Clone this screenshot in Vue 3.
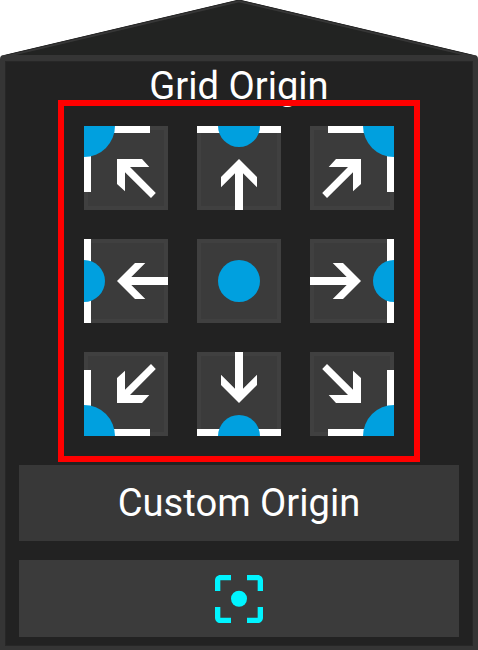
<script setup>
const corner = { bars: 'M0 0H66V7H7V66H0Z', r: 31, cx: 0, cy: 0, arrow: '33,33 58,33 65.3,41 46,41 71.8,67 67,72 41,46.3 41,65.3 33,58' }
const edge = { bars: 'M0 0H84V7H0Z', r: 21, cx: 42, cy: 0, arrow: '42,33 60,51 60,61.3 46,47.3 46,84 38,84 38,47.3 24,61.3 24,51' }
const center = { bars: '', r: 21, cx: 42, cy: 42, arrow: '' }

const cells = [
  { name: 'Top left', shape: corner, transform: '' },
  { name: 'Top', shape: edge, transform: '' },
  { name: 'Top right', shape: corner, transform: 'matrix(-1 0 0 1 84 0)' },
  { name: 'Left', shape: edge, transform: 'rotate(-90 42 42)' },
  { name: 'Center', shape: center, transform: '' },
  { name: 'Right', shape: edge, transform: 'rotate(90 42 42)' },
  { name: 'Bottom left', shape: corner, transform: 'matrix(1 0 0 -1 0 84)' },
  { name: 'Bottom', shape: edge, transform: 'rotate(180 42 42)' },
  { name: 'Bottom right', shape: corner, transform: 'rotate(180 42 42)' },
]
</script>

<template>
  <main class="popup">
    <svg class="roof" viewBox="0 0 478 55" aria-hidden="true">
      <path d="M2 56L239 0L476 56Z" fill="#222322" />
      <path d="M2 57L239 1L476 57" fill="none" stroke="#373737" stroke-width="2.4" />
      <path d="M2 56L239 0L476 56" fill="none" stroke="#252525" stroke-width="1" />
    </svg>
    <section class="panel">
      <h1 class="title">Grid Origin</h1>
      <div class="grid">
        <button v-for="cell in cells" :key="cell.name" class="cell" :aria-label="cell.name">
          <svg viewBox="0 0 84 84" width="84" height="84">
            <g :transform="cell.transform">
              <path :d="cell.shape.bars" fill="#fff" />
              <circle :cx="cell.shape.cx" :cy="cell.shape.cy" :r="cell.shape.r" fill="#00a0df" />
              <polygon :points="cell.shape.arrow" fill="#fff" />
            </g>
          </svg>
        </button>
      </div>
      <button class="action custom">Custom Origin</button>
      <button class="action focus" aria-label="Focus">
        <svg viewBox="3 3 18 18" width="48" height="48" fill="#00f4ff">
          <path d="M5 15H3v4c0 1.1.9 2 2 2h4v-2H5zM5 5h4V3H5c-1.1 0-2 .9-2 2v4h2zM19 3h-4v2h4v4h2V5c0-1.1-.9-2-2-2zM19 19h-4v2h4c1.1 0 2-.9 2-2v-4h-2z" />
          <circle cx="12" cy="11.9" r="3" />
        </svg>
      </button>
    </section>
  </main>
</template>

<style>
body { margin: 0; background: #fff; }
</style>

<style scoped>
.popup {
  width: 478px;
  height: 650px;
  display: flex;
  flex-direction: column;
  overflow: hidden;
  font-family: Roboto, sans-serif;
  color: #fff;
}
.roof { display: block; width: 478px; height: 55px; flex: none; overflow: hidden; }
.panel {
  box-sizing: border-box;
  height: 595px;
  display: flex;
  flex-direction: column;
  align-items: center;
  background: #222;
  border: 5px solid #353535;
  border-top-width: 6px;
  border-bottom-width: 4px;
  border-radius: 4px 4px 0 0;
  box-shadow: inset 0 0 0 1px #272727;
}
.title {
  margin: 0;
  height: 39px;
  line-height: 50px;
  font-size: 38.15px;
  font-weight: 400;
  white-space: nowrap;
}
.grid {
  position: relative;
  box-sizing: border-box;
  width: 362px;
  height: 362px;
  flex: none;
  padding: 20px;
  border: 6px solid #f00;
  display: grid;
  grid-template-columns: repeat(3, 84px);
  grid-template-rows: repeat(3, 84px);
  gap: 29px;
}
.cell {
  margin: 0;
  padding: 0;
  border: 0;
  background: #3b3b3b;
  box-shadow: inset 0 0 0 4px #404040;
}
.cell svg { display: block; overflow: hidden; }
.action {
  box-sizing: border-box;
  width: 440px;
  flex: none;
  padding: 0;
  border: 0;
  display: flex;
  align-items: center;
  justify-content: center;
  color: #fff;
  font: 400 38.15px/46px Roboto, sans-serif;
  white-space: nowrap;
}
.custom { height: 76px; margin-top: 3px; background: #383838; }
.focus { height: 77px; margin-top: 19px; background: #3b3b3b; }
</style>
